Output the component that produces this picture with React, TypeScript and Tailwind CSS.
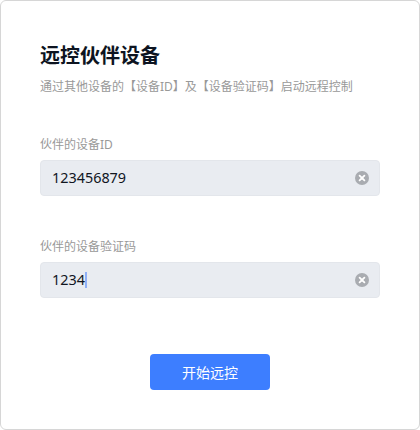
import React from "react";

const font = "font-['Noto_Sans','Noto_Sans_CJK_SC',sans-serif]";

function ClearIcon() {
  return (
    <svg width="14" height="14" viewBox="0 0 14 14" className="shrink-0">
      <circle cx="7" cy="7" r="7" fill="#a9acb1" />
      <path d="M4.6 4.6 9.4 9.4M9.4 4.6 4.6 9.4" stroke="#fff" strokeWidth="1.8" strokeLinecap="round" />
    </svg>
  );
}

function Field({ label, value, caret }: { label: string; value: string; caret?: boolean }) {
  return (
    <div className="flex flex-col">
      <div className="h-[18px] text-[12px] leading-[18px] text-[#999999]">{label}</div>
      <div className="mt-[6px] flex h-[36px] items-center justify-between rounded-[4px] border border-[#e3e6eb] bg-[#e9ecf1] pl-[11px] pr-[10px]">
        <div className="flex h-[18px] items-center text-[14.4px] leading-[18px] text-[#11161f]">
          {value}
          {caret && <span className="h-[16px] w-[2px] shrink-0 bg-[#8fb0f8]" />}
        </div>
        <ClearIcon />
      </div>
    </div>
  );
}

export default function App() {
  return (
    <div className={`${font} flex h-[430px] w-[420px] flex-col rounded-[6px] border border-[#d6d6d6] bg-white px-[39px]`}>
      <h1 className="mt-[41px] text-[20px] font-bold leading-[28px] text-[#0d1421]">远控伙伴设备</h1>
      <p className="mt-[8px] text-[12px] leading-[18px] text-[#999999]">通过其他设备的【设备ID】及【设备验证码】启动远程控制</p>
      <div className="mt-[40px] flex flex-col gap-[42px]">
        <Field label="伙伴的设备ID" value="123456879" />
        <Field label="伙伴的设备验证码" value="1234" caret />
      </div>
      <div className="mt-[56px] flex justify-center">
        <button className="h-[36px] w-[120px] rounded-[4px] bg-[#3d7eff] text-[14px] text-white">开始远控</button>
      </div>
    </div>
  );
}
